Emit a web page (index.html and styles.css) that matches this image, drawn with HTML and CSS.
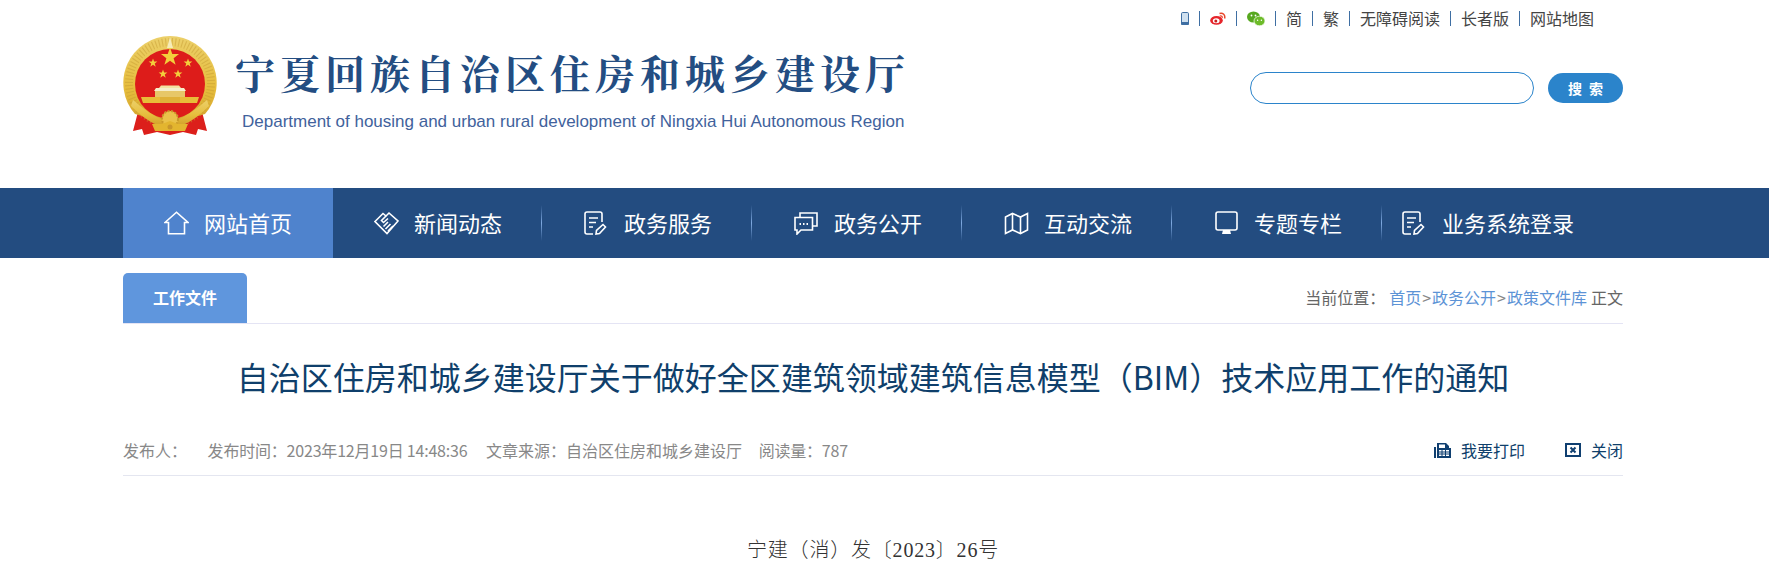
FILE: index.html
```html
<!DOCTYPE html>
<html lang="zh-CN">
<head>
    <meta charset="UTF-8">
    <title>自治区住房和城乡建设厅关于做好全区建筑领域建筑信息模型（BIM）技术应用工作的通知</title>
    <link rel="stylesheet" href="styles.css">
</head>
<body>
    <!-- Header -->
    <header class="wrap header">
        <div class="logo">
            <svg class="emblem" viewBox="0 0 94 100" width="94" height="100">
                <defs>
                    <linearGradient id="gold" x1="0" y1="0" x2="0" y2="1">
                        <stop offset="0" stop-color="#ecd06a"/>
                        <stop offset="0.6" stop-color="#e6bd3c"/>
                        <stop offset="1" stop-color="#d3a22c"/>
                    </linearGradient>
                    <polygon id="star" points="0,-10 2.4,-3.2 9.5,-3.1 3.8,1.2 5.9,8.1 0,4 -5.9,8.1 -3.8,1.2 -9.5,-3.1 -2.4,-3.2"/>
                </defs>
                <path d="M16 72 L10 95 L19 93 L21 99 L34 96 L47 99 L60 96 L73 99 L75 93 L84 95 L78 72 Z" fill="#dc1f1b"/>
                <path d="M47 0 A47 47 0 0 1 82 78 L47 88 L12 78 A47 47 0 0 1 47 0 Z" fill="url(#gold)"/>
                <circle cx="47" cy="47" r="41" fill="none" stroke="#c39a30" stroke-width="8" stroke-dasharray="1.1 2.2" opacity="0.45"/>
                <polygon points="47,1 50,12 44,12" fill="#f6ecb8"/>
                <circle cx="47" cy="48" r="35" fill="#dd1c1a"/>
                <use href="#star" transform="translate(47 21) scale(0.95)" fill="#f3cf3c"/>
                <use href="#star" transform="translate(30 27) scale(0.46)" fill="#f3cf3c"/>
                <use href="#star" transform="translate(65 27) scale(0.46)" fill="#f3cf3c"/>
                <use href="#star" transform="translate(40 38) scale(0.46)" fill="#f3cf3c"/>
                <use href="#star" transform="translate(55 38) scale(0.46)" fill="#f3cf3c"/>
                <!-- gate tower -->
                <path d="M36 52 L38 49.500 H56 L58 52 Z" fill="#f3e2a0"/>
                <path d="M33 52 H61 L63 55 H31 Z" fill="#f6eecb"/>
                <path d="M32 55 H62 V61 H32 Z" fill="#e7c768"/>
                <path d="M18 61 H76 L74 67 H20 Z" fill="#e8bd38"/>
                <path d="M37 61 H57 V67 H37 Z" fill="#d9a93a" opacity="0.6"/>
                <!-- ribbon round the disc and the half gear -->
                <path d="M10 64 Q26 78 38 83 H56 Q68 78 84 64 L86 70 Q72 84 60 89 H34 Q22 84 8 70 Z" fill="url(#gold)"/>
                <circle cx="47" cy="83" r="8" fill="#eac24a" stroke="#c9982a" stroke-width="2" stroke-dasharray="2 1.5"/>
                <path d="M29 88 H39 L47 85 L55 88 H65 L62 95 H32 Z" fill="#e3b52f"/>
                <circle cx="47" cy="91" r="2.500" fill="#c9962a"/>
            </svg>
            <div class="logo-text">
                <div class="logo-cn">宁夏回族自治区住房和城乡建设厅</div>
                <div class="logo-en">Department of housing and urban rural development of Ningxia Hui Autonomous Region</div>
            </div>
        </div>
        <div class="header-right">
            <ul class="toplinks">
                <li>
                    <svg width="8" height="13" viewBox="0 0 8 13"><rect x="0.5" y="0.5" width="7" height="12" rx="1.2" fill="#cfe0ef" stroke="#3f6fa3"/><rect x="0" y="10" width="8" height="3" rx="1" fill="#3f6fa3"/></svg>
                </li>
                <li>
                    <svg width="16" height="13" viewBox="0 0 16 13">
                        <ellipse cx="6.500" cy="8.400" rx="6.300" ry="4.400" fill="#e6242a"/>
                        <ellipse cx="6.200" cy="8.800" rx="3.400" ry="2.500" fill="#fff"/>
                        <circle cx="5.800" cy="9" r="1.500" fill="#c8201f"/>
                        <path d="M9.500 1.500 C13 0.500 15.500 3 14.600 6.500" fill="none" stroke="#e8452a" stroke-width="1.500"/>
                        <path d="M9.800 4 C11.500 3.400 12.600 4.500 12.200 6" fill="none" stroke="#e8452a" stroke-width="1.200"/>
                    </svg>
                </li>
                <li>
                    <svg width="18" height="15" viewBox="0 0 18 15">
                        <ellipse cx="6.500" cy="6" rx="6.500" ry="5.600" fill="#57a81f"/>
                        <ellipse cx="12.500" cy="10" rx="5.500" ry="4.800" fill="#6dbb2a" stroke="#fff" stroke-width="0.7"/>
                        <circle cx="4.500" cy="4.500" r="0.9" fill="#fff"/>
                        <circle cx="8.500" cy="4.500" r="0.9" fill="#fff"/>
                        <circle cx="10.600" cy="9.200" r="0.7" fill="#fff"/>
                        <circle cx="14.400" cy="9.200" r="0.7" fill="#fff"/>
                    </svg>
                </li>
                <li>简</li>
                <li>繁</li>
                <li>无障碍阅读</li>
                <li>长者版</li>
                <li>网站地图</li>
            </ul>
            <div class="search">
                <input type="text" class="search-input">
                <button class="search-btn">搜 索</button>
            </div>
        </div>
    </header>

    <!-- Main nav -->
    <nav class="navbar">
        <ul class="wrap nav">
            <li class="nav-item active">
                <svg width="25" height="24" viewBox="0 0 25 24" class="nav-icon"><path d="M1 11.500 L12.500 1.200 L24 11.500 H20.500 V22.800 H4.500 V11.500 Z"/></svg>
                <span>网站首页</span>
            </li>
            <li class="nav-item">
                <svg width="25" height="24" viewBox="0 0 25 24" class="nav-icon">
                    <path d="M1 10.500 L9 2.500 L12 5 L15 2 L24 10 L13 22.500 Z"/>
                    <path d="M12 5 L7.500 9.500 L9.500 11.500 L14 7.500"/>
                    <path d="M9.500 15.500 L14 11 M11.500 18 L16.500 13 M14 20 L19 15"/>
                </svg>
                <span>新闻动态</span>
            </li>
            <li class="nav-item">
                <svg width="25" height="24" viewBox="0 0 25 24" class="nav-icon">
                    <path d="M9 23 H3 Q1 23 1 21 V3 Q1 1 3 1 H16 Q18 1 18 3 V11"/>
                    <path d="M5 7 H14 M5 11.500 H12 M5 16 H9"/>
                    <path d="M12 23 L12.500 19.500 L19 13.500 L21.500 16 L15.500 22.500 Z"/>
                </svg>
                <span>政务服务</span>
            </li>
            <li class="nav-item">
                <svg width="25" height="23" viewBox="0 0 25 23" class="nav-icon">
                    <path d="M6 5 V1 H23 V14 H19"/>
                    <path d="M1 5.500 H18.500 V18 H7 L3 22 V18 H1 Z"/>
                    <path class="dots" d="M5.500 12 H7 M9 12 H10.500 M12.500 12 H14"/>
                </svg>
                <span>政务公开</span>
            </li>
            <li class="nav-item">
                <svg width="25" height="23" viewBox="0 0 25 23" class="nav-icon">
                    <path d="M1.500 5 L8.500 1.500 L16.500 5 L23.500 1.500 V18 L16.500 21.500 L8.500 18 L1.500 21.500 Z"/>
                    <path d="M8.500 1.500 V18 M16.500 5 V21.500"/>
                </svg>
                <span>互动交流</span>
            </li>
            <li class="nav-item">
                <svg width="25" height="25" viewBox="0 0 25 25" class="nav-icon">
                    <rect x="2" y="1" width="21" height="18" rx="2"/>
                    <path class="fill" d="M9 19 H16 L17 23 H8 Z"/>
                </svg>
                <span>专题专栏</span>
            </li>
            <li class="nav-item">
                <svg width="25" height="24" viewBox="0 0 25 24" class="nav-icon">
                    <path d="M9 23 H3 Q1 23 1 21 V3 Q1 1 3 1 H16 Q18 1 18 3 V11"/>
                    <path d="M5 7 H14 M5 11.500 H12 M5 16 H9"/>
                    <path d="M12 23 L12.500 19.500 L19 13.500 L21.500 16 L15.500 22.500 Z"/>
                </svg>
                <span>业务系统登录</span>
            </li>
        </ul>
    </nav>

    <div class="wrap">
        <div class="crumb-bar">
            <div class="tab">工作文件</div>
            <div class="crumbs">
                <span class="crumbs-label">当前位置：</span><a href="#">首页</a><span class="gt">&gt;</span><a href="#">政务公开</a><span class="gt">&gt;</span><a href="#">政策文件库</a><span class="crumbs-end">正文</span>
            </div>
        </div>

        <h1 class="title">自治区住房和城乡建设厅关于做好全区建筑领域建筑信息模型（BIM）技术应用工作的通知</h1>

        <div class="meta">
            <div class="meta-left">
                <span class="meta-publisher">发布人：</span>
                <span class="meta-date">发布时间：2023年12月19日 14:48:36</span>
                <span class="meta-source">文章来源：自治区住房和城乡建设厅</span>
                <span class="meta-reads">阅读量：787</span>
            </div>
            <div class="meta-right">
                <a href="#" class="print">
                    <svg width="17" height="16" viewBox="0 0 17 16">
                        <path d="M0 5 H2 V16 H0 Z M3 1 H12 L15 4 V6 H17 V16 H3 Z" fill="#0f3f70"/>
                        <path d="M5 2.500 H11 V6 H5 Z" fill="#fff"/>
                        <path d="M5 8 H15 V14 H5 Z" fill="#fff"/>
                        <path d="M5 10 H15 M5 12 H15 M8 8 V14 M11.500 8 V14" stroke="#0f3f70" stroke-width="1"/>
                    </svg>
                    我要打印
                </a>
                <a href="#" class="close">
                    <svg width="16" height="14" viewBox="0 0 16 14">
                        <rect x="1" y="1" width="14" height="12" fill="#fff" stroke="#0f3f70" stroke-width="2"/>
                        <path d="M5.500 4.500 L10.500 9.500 M10.500 4.500 L5.500 9.500" stroke="#0f3f70" stroke-width="2"/>
                    </svg>
                    关闭
                </a>
            </div>
        </div>

        <p class="doc-no">宁建（消）发〔2023〕26号</p>
    </div>
</body>
</html>
```

FILE: styles.css
```css
* {
    box-sizing: border-box;
    margin: 0;
    padding: 0;
}

body {
    font-family: "Noto Sans CJK SC", "Liberation Sans", sans-serif;
    color: #333;
    overflow: hidden;
}

a {
    text-decoration: none;
    color: inherit;
}

ul {
    list-style: none;
}

.wrap {
    width: 1500px;
    margin-left: 123px;
}

/* header */
.header {
    height: 188px;
    display: flex;
    justify-content: space-between;
}

.logo {
    display: flex;
    padding-top: 36px;
}

.emblem {
    flex: none;
}

.logo-text {
    margin-left: 18px;
}

.logo-cn {
    font-family: "Noto Serif CJK SC", "Noto Sans CJK SC", serif;
    font-size: 40px;
    font-weight: 700;
    line-height: 58px;
    letter-spacing: 5px;
    color: #234d82;
    margin-top: 7px;
}

.logo-en {
    font-family: "Liberation Sans", sans-serif;
    font-size: 17px;
    line-height: 20px;
    color: #41629c;
    margin: 11px 0 0 7px;
}

.header-right {
    display: flex;
    flex-direction: column;
    align-items: flex-end;
}

.toplinks {
    display: flex;
    align-items: center;
    height: 36px;
    margin-right: 29px;
    font-size: 16px;
    line-height: 16px;
    color: #444;
}

.toplinks li {
    display: flex;
    align-items: center;
    height: 15px;
    padding: 0 10px;
    border-right: 1px solid #3f6fa3;
}

.toplinks li:last-child {
    border-right: none;
    padding-right: 0;
}

.search {
    display: flex;
    align-items: center;
    gap: 14px;
    margin-top: 36px;
}

.search-input {
    width: 284px;
    height: 32px;
    border: 1px solid #2b84cb;
    border-radius: 16px;
    outline: none;
}

.search-btn {
    width: 75px;
    height: 30px;
    border: none;
    border-radius: 15px;
    background: #2b84cb;
    color: #fff;
    font-family: inherit;
    font-size: 14px;
    font-weight: 700;
    word-spacing: 4px;
}

/* nav */
.navbar {
    height: 70px;
    background: #234c80;
}

.nav {
    display: flex;
    height: 70px;
}

.nav-item {
    position: relative;
    flex: none;
    width: 210px;
    display: flex;
    align-items: center;
    justify-content: center;
    gap: 15px;
    font-size: 22px;
    color: #fff;
}

.nav-item span {
    padding-bottom: 2px;
}

.nav-item.active {
    background: #4f83cd;
}

.nav-item:not(.active):not(:last-child)::after {
    content: "";
    position: absolute;
    right: 1px;
    top: 17px;
    width: 1px;
    height: 36px;
    background: linear-gradient(to bottom, rgba(120, 165, 225, 0), #7fa9e0 50%, rgba(120, 165, 225, 0));
}

.nav-icon {
    flex: none;
    fill: none;
    stroke: #fff;
    stroke-width: 1.6;
}

.nav-icon .fill {
    fill: #fff;
    stroke: none;
}

.nav-icon .dots {
    stroke-width: 2;
}

/* breadcrumb row */
.crumb-bar {
    display: flex;
    justify-content: space-between;
    align-items: flex-end;
    height: 66px;
    border-bottom: 1px solid #e4e4f4;
}

.tab {
    width: 124px;
    height: 50px;
    line-height: 48px;
    text-align: center;
    background: #5f96dd;
    border-radius: 5px 5px 0 0;
    color: #fff;
    font-size: 16px;
    font-weight: 700;
}

.crumbs {
    height: 50px;
    line-height: 48px;
    font-size: 16px;
    color: #666;
}

.crumbs a {
    color: #5c93d6;
}

.crumbs-label {
    margin-right: 4px;
}

.gt {
    color: #888;
    margin: 0 1px;
}

.crumbs-end {
    margin-left: 4px;
}

/* article head */
.title {
    font-size: 32px;
    font-weight: 400;
    line-height: 44px;
    text-align: center;
    color: #0f3f6b;
    margin-top: 30px;
}

.meta {
    display: flex;
    justify-content: space-between;
    align-items: center;
    height: 52px;
    margin-top: 26px;
    border-bottom: 1px solid #e4e6f0;
    font-size: 16px;
    color: #888;
}

.meta-publisher {
    margin-right: 17px;
}

.meta-date {
    margin-right: 15px;
    letter-spacing: -0.2px;
}

.meta-source {
    margin-right: 13px;
}

.meta-reads {
    letter-spacing: -0.2px;
}

.meta-right {
    display: flex;
    color: #0f3f6b;
}

.meta-right a {
    display: flex;
    align-items: center;
    gap: 10px;
}

.close {
    margin-left: 40px;
}

.doc-no {
    font-family: "Liberation Serif", "Noto Sans CJK SC", serif;
    font-weight: 300;
    font-size: 20px;
    letter-spacing: 0.8px;
    line-height: 30px;
    text-align: center;
    color: #333;
    margin-top: 59px;
}
```
